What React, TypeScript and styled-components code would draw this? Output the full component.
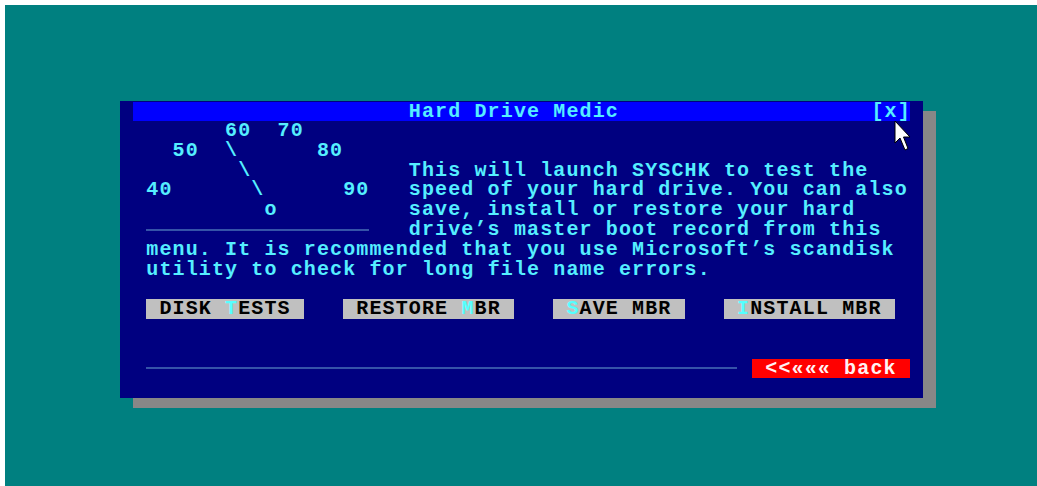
import styled, { createGlobalStyle } from 'styled-components';

// text-mode cell size: 80 columns, 25 rows
const CH = 13.13;
const ROW = 19.8;
const GLYPH = 12.002; // Liberation Mono advance at 20px

const GlobalStyle = createGlobalStyle`
  html, body {
    margin: 0;
    padding: 0;
    background: #ffffff;
  }
`;

const Screen = styled.div`
  margin: 5px 0 0 5px;
  width: 1032px;
  height: 481px;
  box-sizing: border-box;
  padding: 96px 0 0 115px;
  background: #008080;
`;

const Dialog = styled.div`
  position: relative;
  width: 803px;
  background: #000080;
  box-shadow: 13px 10px 0 #878787;
  font-family: "Liberation Mono", "DejaVu Sans Mono", monospace;
  font-weight: bold;
  font-size: 20px;
  letter-spacing: ${CH - GLYPH}px;
  line-height: ${ROW}px;
  color: #55eeff;
`;

const TitleRow = styled.div`
  height: 20px;
  box-sizing: border-box;
  padding: 1px ${CH}px 0;
`;

const TitleBar = styled.div`
  display: flex;
  height: 19px;
  line-height: 19px;
  padding-left: ${21 * CH}px;
  background: #0000ff;
  white-space: pre;
`;

const CloseBox = styled.span`
  margin-left: auto;
  margin-right: -1px;
`;

const Body = styled.div`
  padding: 0 0 ${ROW}px ${2 * CH}px;
`;

const Top = styled.div`
  display: flex;
`;

const Gauge = styled.div`
  width: ${20 * CH}px;
  white-space: pre;
`;

const Line = styled.div`
  height: ${ROW}px;
  white-space: pre;
`;

const RuleRow = styled.div`
  display: flex;
  align-items: center;
  height: ${ROW}px;
`;

const Rule = styled.div<{ $cols: number }>`
  width: ${(p) => p.$cols * CH}px;
  height: 2px;
  background: #3553a8;
`;

const Intro = styled.div`
  padding-top: ${2 * ROW}px;
`;

const ButtonRow = styled.div`
  display: flex;
  gap: ${3 * CH}px;
  margin-top: ${ROW}px;
  height: ${ROW}px;
`;

const MenuButton = styled.span`
  padding: 0 ${CH}px;
  background: #c0c0c0;
  color: #000000;
  white-space: pre;
`;

const Hot = styled.span`
  color: #55ffff;
`;

const BottomRow = styled.div`
  display: flex;
  align-items: center;
  height: ${ROW}px;
  margin-top: ${2 * ROW}px;
`;

const BackButton = styled.span`
  width: ${12 * CH}px;
  box-sizing: border-box;
  margin-left: ${CH + 2}px;
  padding-left: ${CH}px;
  background: #ff0000;
  color: #fff2f2;
  white-space: pre;
`;

const Pointer = styled.svg`
  position: absolute;
  left: 774px;
  top: 19px;
`;

const gaugeLines = [
  '      60  70',
  '  50  \\      80',
  '       \\',
  '40      \\      90',
  '         o',
];

const introLines = [
  'This will launch SYSCHK to test the',
  'speed of your hard drive. You can also',
  'save, install or restore your hard',
  'drive\u2019s master boot record from this',
];

const buttons = [
  { before: 'DISK ', hot: 'T', after: 'ESTS' },
  { before: 'RESTORE ', hot: 'M', after: 'BR' },
  { before: '', hot: 'S', after: 'AVE MBR' },
  { before: '', hot: 'I', after: 'NSTALL MBR' },
];

export default function App() {
  return (
    <>
      <GlobalStyle />
      <Screen>
        <Dialog>
          <TitleRow>
            <TitleBar>
              <span>Hard Drive Medic</span>
              <CloseBox>[x]</CloseBox>
            </TitleBar>
          </TitleRow>
          <Body>
            <Top>
              <Gauge>
                {gaugeLines.map((l, i) => (
                  <Line key={i}>{l}</Line>
                ))}
                <RuleRow>
                  <Rule $cols={17} />
                </RuleRow>
              </Gauge>
              <Intro>
                {introLines.map((l, i) => (
                  <Line key={i}>{l}</Line>
                ))}
              </Intro>
            </Top>
            <Line>menu. It is recommended that you use Microsoft’s scandisk</Line>
            <Line>utility to check for long file name errors.</Line>
            <ButtonRow>
              {buttons.map((b, i) => (
                <MenuButton key={i}>
                  {b.before}
                  <Hot>{b.hot}</Hot>
                  {b.after}
                </MenuButton>
              ))}
            </ButtonRow>
            <BottomRow>
              <Rule $cols={45} />
              <BackButton>{'<<««« back'}</BackButton>
            </BottomRow>
          </Body>
          <Pointer width="18" height="31" viewBox="0 0 18 31">
            <path
              d="M1 1 L1 23 L6 18 L11 30 L14 28.5 L9.5 17 L16 17 Z"
              fill="#ffffff"
              stroke="#000000"
              strokeWidth="1"
              strokeLinejoin="miter"
            />
          </Pointer>
        </Dialog>
      </Screen>
    </>
  );
}
